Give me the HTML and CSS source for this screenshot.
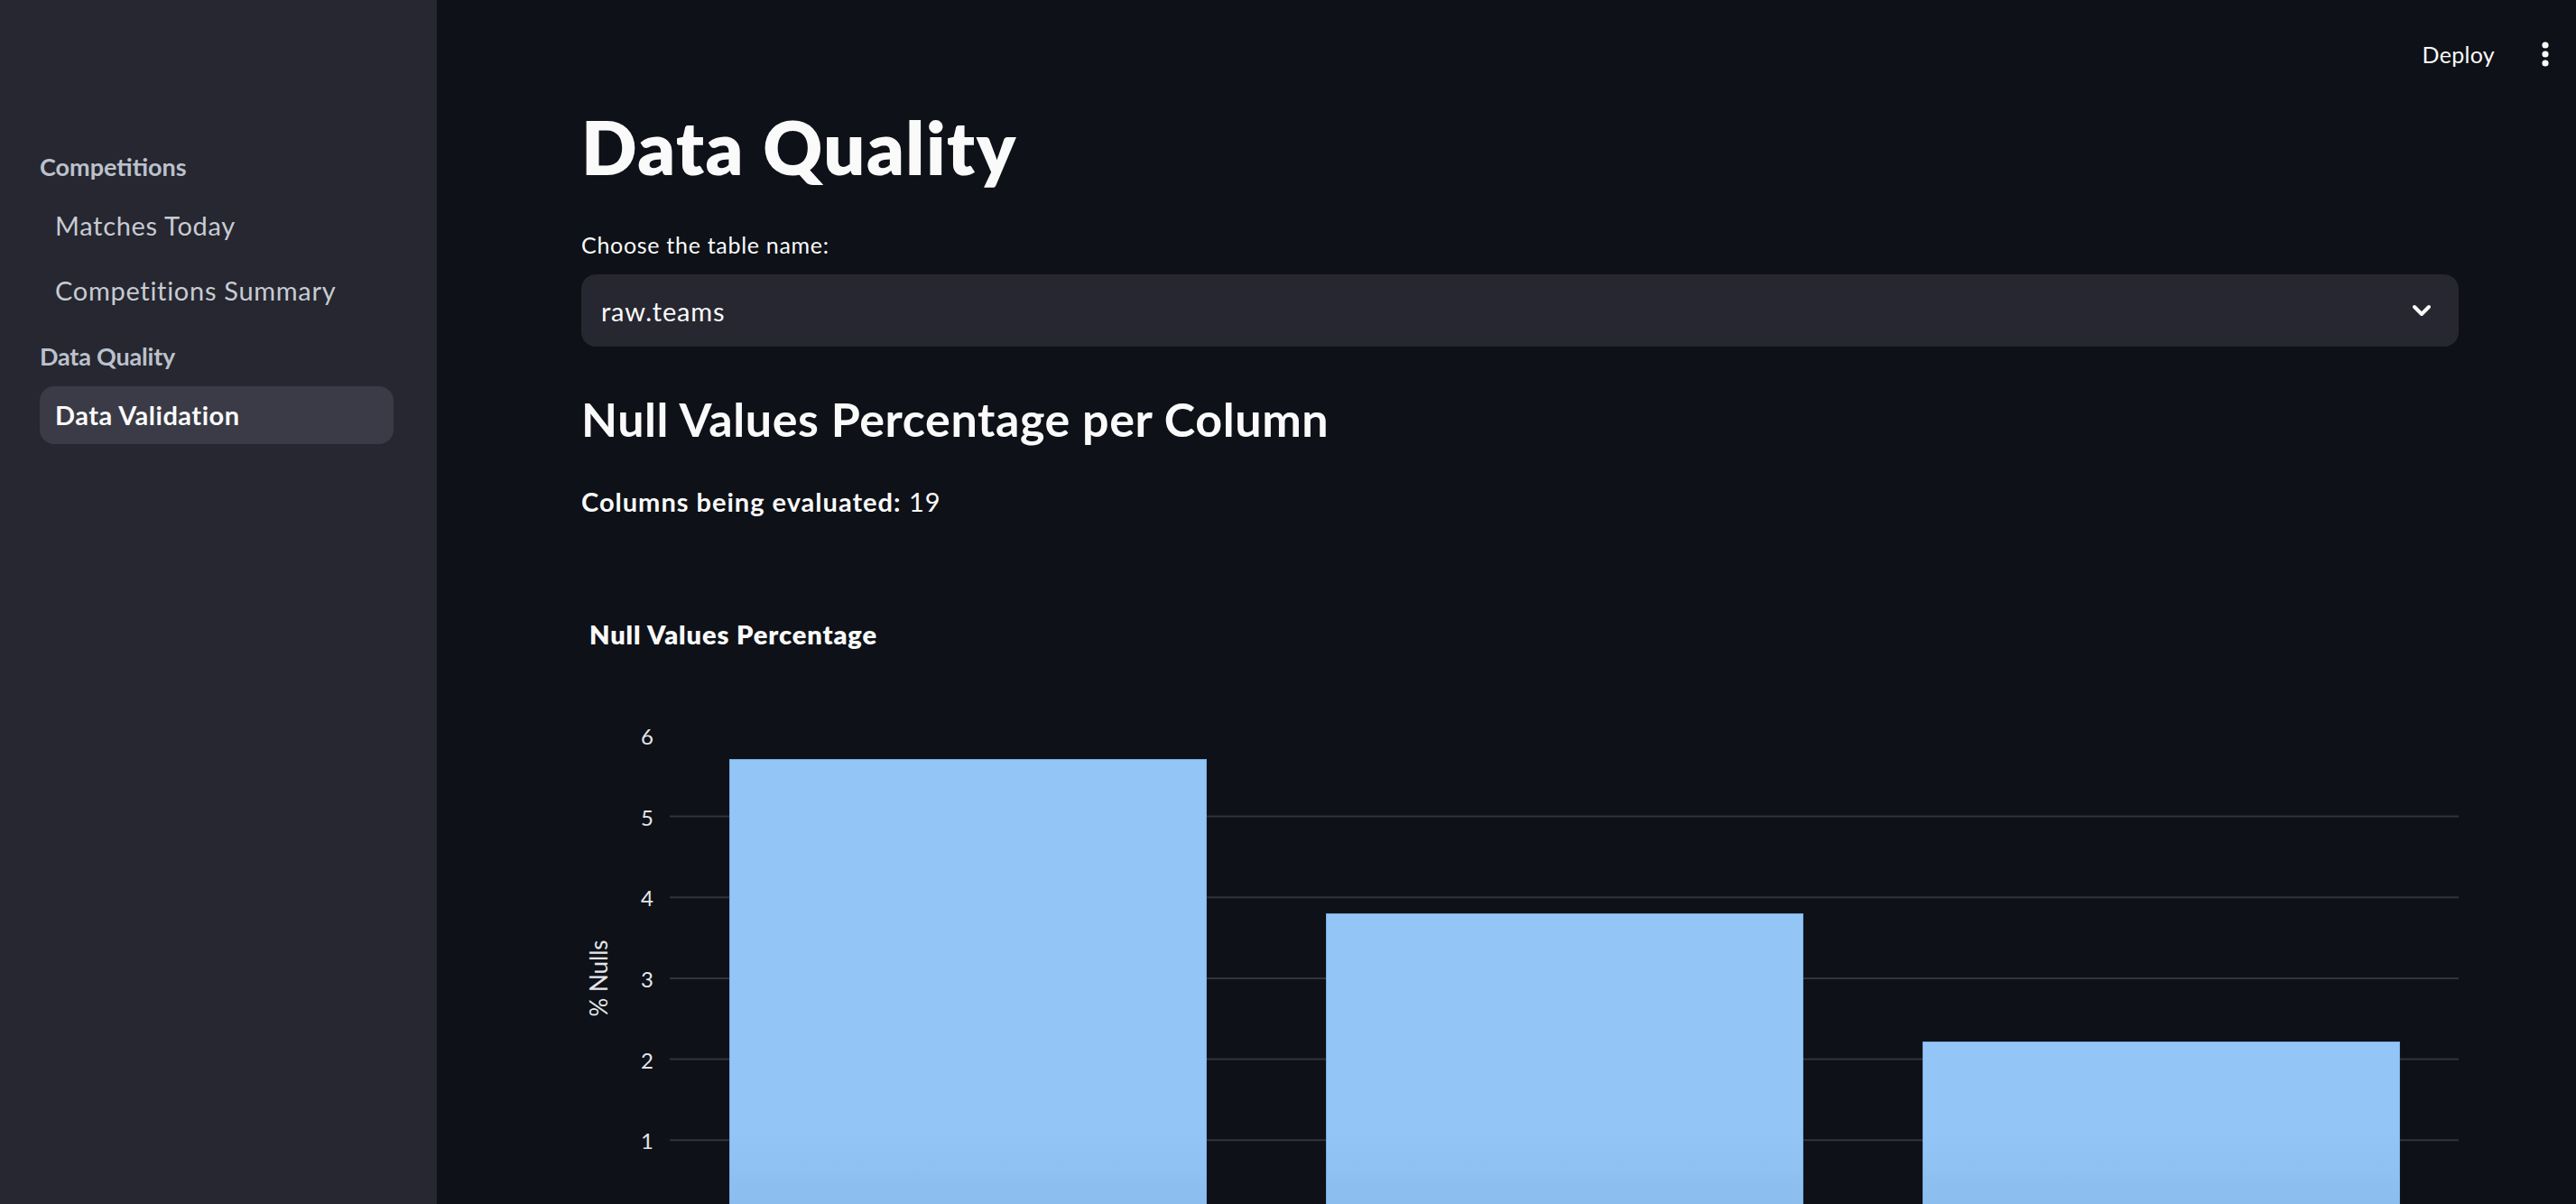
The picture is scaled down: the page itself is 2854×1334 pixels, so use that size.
FILE: index.html
```html
<!DOCTYPE html>
<html>
<head lang="en">
    <meta charset="UTF-8">
    <title>Data Quality</title>
    <link rel="stylesheet" href="styles.css">
</head>
<body>
    <div class="app">
        <aside class="sidebar">
            <div class="nav-header">Competitions</div>
            <a class="nav-link">Matches Today</a>
            <a class="nav-link">Competitions Summary</a>
            <div class="nav-header second">Data Quality</div>
            <a class="nav-link active">Data Validation</a>
        </aside>

        <main class="main">
            <header class="topbar">
                <span class="deploy">Deploy</span>
                <svg class="menu" width="8" height="28" viewBox="0 0 8 28">
                    <circle cx="4" cy="4" r="3.6" fill="#fafafa"/>
                    <circle cx="4" cy="14" r="3.6" fill="#fafafa"/>
                    <circle cx="4" cy="24" r="3.6" fill="#fafafa"/>
                </svg>
            </header>

            <div class="block">
                <h1 class="title">Data Quality</h1>

                <label class="field-label">Choose the table name:</label>
                <div class="select">
                    <span class="select-value">raw.teams</span>
                    <svg class="chevron" width="22" height="14" viewBox="0 0 22 14">
                        <polyline points="3,3 11,11 19,3" fill="none" stroke="#fafafa" stroke-width="4" stroke-linecap="round" stroke-linejoin="round"/>
                    </svg>
                </div>

                <h3 class="subtitle">Null Values Percentage per Column</h3>
                <p class="count"><b>Columns being evaluated:</b> 19</p>

                <div class="chart">
                    <h4 class="chart-title">Null Values Percentage</h4>
                    <svg class="plot" width="2080" height="600" viewBox="0 0 2080 600">
                        <defs>
                            <linearGradient id="barFill" gradientUnits="userSpaceOnUse" x1="0" y1="470" x2="0" y2="560">
                                <stop offset="0" stop-color="#93c6f7"/>
                                <stop offset="1" stop-color="#8bbcee"/>
                            </linearGradient>
                        </defs>
                        <!-- grid -->
                        <g stroke="#31333d" stroke-width="2">
                            <line x1="98" y1="124.5" x2="2080" y2="124.5"/>
                            <line x1="98" y1="214.2" x2="2080" y2="214.2"/>
                            <line x1="98" y1="303.9" x2="2080" y2="303.9"/>
                            <line x1="98" y1="393.6" x2="2080" y2="393.6"/>
                            <line x1="98" y1="483.3" x2="2080" y2="483.3"/>
                        </g>
                        <!-- axis labels -->
                        <g class="tick" text-anchor="end" dominant-baseline="central">
                            <text x="80" y="35">6</text>
                            <text x="80" y="125">5</text>
                            <text x="80" y="214">4</text>
                            <text x="80" y="304">3</text>
                            <text x="80" y="394">2</text>
                            <text x="80" y="483">1</text>
                        </g>
                        <text class="axis-title" x="19" y="304" text-anchor="middle" dominant-baseline="central" transform="rotate(-90 19 304)">% Nulls</text>
                        <!-- bars -->
                        <g fill="url(#barFill)" stroke="#7aaee2" stroke-width="1">
                            <rect x="164.5" y="61.5" width="528" height="540"/>
                            <rect x="825.5" y="232.5" width="528" height="370"/>
                            <rect x="1486.5" y="374.5" width="528" height="228"/>
                        </g>
                    </svg>
                </div>
            </div>
        </main>
    </div>
</body>
</html>
```

FILE: styles.css
```css
*{
    margin: 0;
    padding: 0;
    box-sizing: border-box;
}
html, body{
    height: 100%;
    overflow: hidden;
}
body{
    background: #0e1117;
    color: #fafafa;
    font-family: "Lato", "Noto Sans", sans-serif;
}
.app{
    display: flex;
    height: 100vh;
}

/* sidebar */
.sidebar{
    width: 484px;
    flex-shrink: 0;
    background: #262730;
    padding: 165px 48px 0 44px;
    display: flex;
    flex-direction: column;
}
.nav-header{
    height: 40px;
    line-height: 40px;
    font-size: 27px;
    font-weight: 700;
    color: #bcc1cc;
    margin-bottom: 13px;
}
.nav-header.second{
    margin-top: 13px;
    letter-spacing: -0.2px;
}
.nav-link{
    display: block;
    height: 64px;
    line-height: 64px;
    padding-left: 17px;
    border-radius: 16px;
    font-size: 29px;
    letter-spacing: 0.7px;
    color: #c7cbd3;
    margin-bottom: 8px;
}
.nav-link.active{
    background: #3a3b46;
    color: #fafafa;
    font-weight: 700;
    letter-spacing: 0.5px;
}

/* main */
.main{
    flex: 1;
    display: flex;
    flex-direction: column;
    min-width: 0;
}
.topbar{
    flex-shrink: 0;
    height: 114px;
    padding: 6px 30px 0 0;
    display: flex;
    justify-content: flex-end;
    align-items: center;
    gap: 52px;
}
.deploy{
    font-size: 25px;
    line-height: 40px;
    letter-spacing: 0.3px;
}
.block{
    flex-shrink: 0;
    padding: 0 130px 0 160px;
}
.title{
    font-size: 81px;
    line-height: 97px;
    font-weight: 800;
    letter-spacing: 1.5px;
}
.field-label{
    display: block;
    margin-top: 45px;
    font-size: 25px;
    line-height: 30px;
    letter-spacing: 0.7px;
}
.select{
    margin-top: 18px;
    height: 80px;
    background: #262730;
    border-radius: 16px;
    display: flex;
    align-items: center;
    justify-content: space-between;
    padding: 0 30px 0 22px;
}
.select-value{
    font-size: 29px;
    letter-spacing: 0.8px;
}
.subtitle{
    margin-top: 49px;
    font-size: 52px;
    line-height: 62px;
    font-weight: 700;
    letter-spacing: 0.6px;
}
.count{
    margin-top: 44px;
    font-size: 29px;
    line-height: 34px;
    letter-spacing: 1px;
}
.count b{
    font-weight: 700;
}
.chart-title{
    margin-top: 112px;
    padding-left: 9px;
    font-size: 29px;
    line-height: 35px;
    font-weight: 800;
    letter-spacing: 0.9px;
}
.plot{
    display: block;
    margin-top: 60px;
    overflow: visible;
}
.tick{
    font-family: "Lato", "Noto Sans", sans-serif;
    font-size: 24px;
    fill: #e4e6eb;
}
.axis-title{
    font-family: "Lato", "Noto Sans", sans-serif;
    font-size: 26px;
    fill: #e4e6eb;
}
```
